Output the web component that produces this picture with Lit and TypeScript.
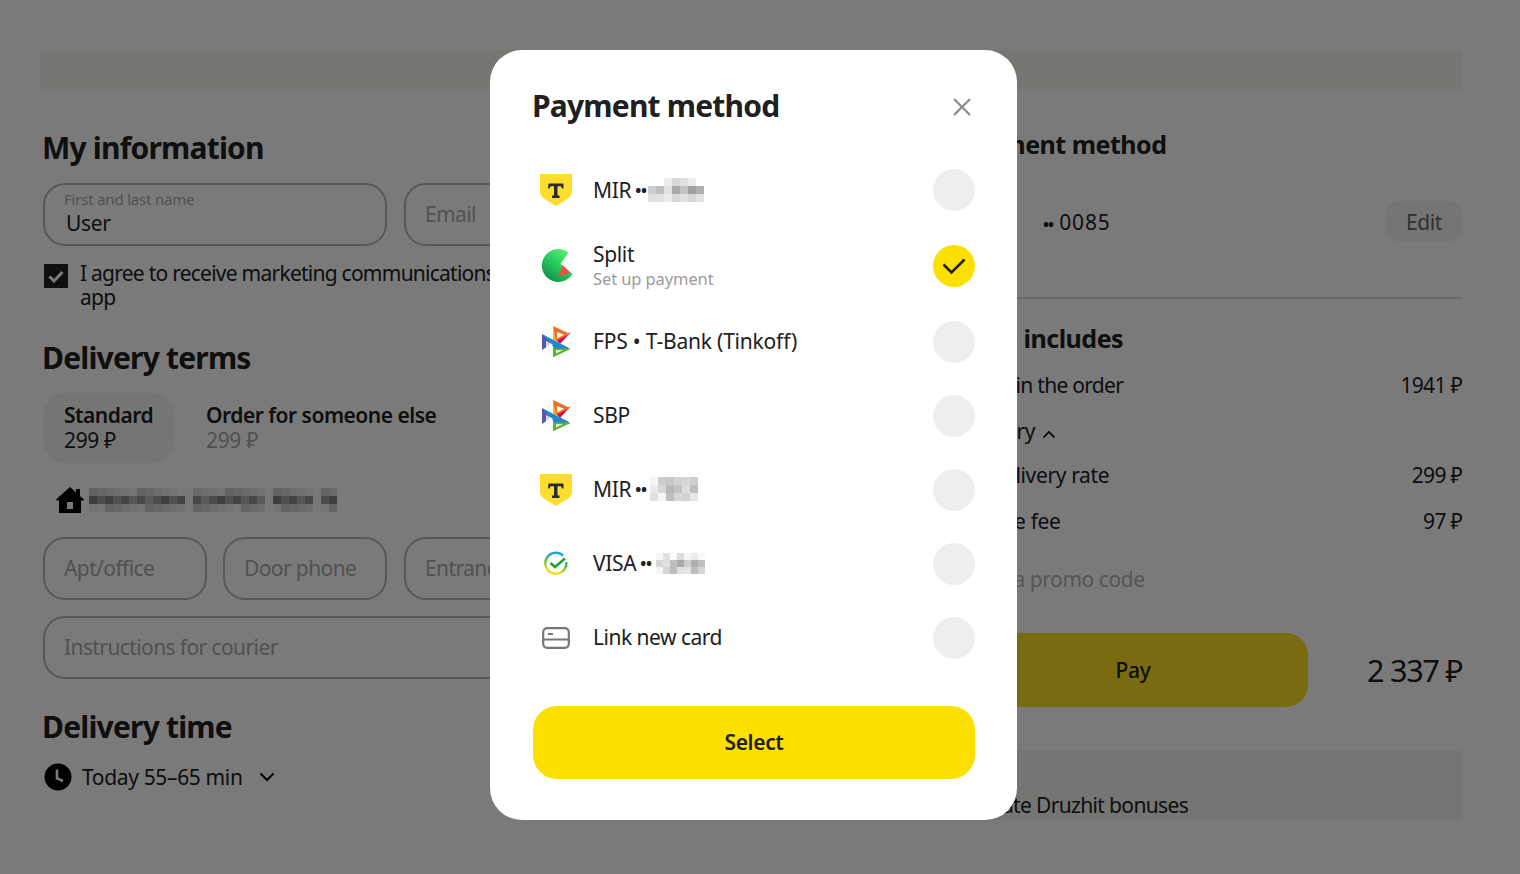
import { LitElement, html, css, svg } from "lit";
import { customElement } from "lit/decorators.js";

const shield = svg`<svg width="34" height="34" viewBox="0 0 34 34"><path fill="#ffdd2d" d="M1 1h32v17c0 5-3 7-7 9.500l-9 5.500-9-5.500C4 25 1 23 1 18z"/><path fill="#2a2a2a" d="M9.500 10.500h15v5h-1.500l-1-2.300h-3.500v9.300h2v2.500h-7.500v-2.500h2v-9.300h-3.500l-1 2.300h-1.500z"/></svg>`;
const split = svg`<svg class="sp" width="34" height="36" viewBox="0 0 34 36"><defs><linearGradient id="g" x1="0.800" y1="0.050" x2="0.200" y2="0.950"><stop offset="0" stop-color="#55f26c"/><stop offset="0.500" stop-color="#27c95c"/><stop offset="1" stop-color="#0f8f4a"/></linearGradient></defs><path fill="url(#g)" d="M19.500 16L27.500 4.500A16.500 16.500 0 1 0 31.500 26z"/><path fill="#f0513e" d="M21.500 17L29 24.500Q24 28 16.500 27.500Q21 23 21.500 17z"/></svg>`;
const sbp = svg`<svg width="30" height="34" viewBox="0 0 30 34"><path fill="#5b57a2" d="M1 9l12 8-12 8z"/><path fill="#d90751" d="M15 15l15-8-11 12z"/><path fill="#fab900" d="M12 1l3 14-3 3z"/><path fill="#ed6f26" d="M12 1l17 8-14 7z"/><path fill="#fff" d="M16 7l7 2.800-7 3.700z"/><path fill="#0f754e" d="M12 32l17-8-13-3z"/><path fill="#63b22f" d="M12 19l17 5-17 8z"/><path fill="#1e88d2" d="M1 9l28 14.500H14z"/><path fill="#fff" d="M5 16l7 3.500-7 3.500z" opacity="0.750"/><path fill="#fff" d="M15 25l7 0-7 3.500z" opacity="0.800"/></svg>`;
const sber = svg`<svg width="26" height="26" viewBox="0 0 26 26"><defs><linearGradient id="s" x1="0.350" y1="1" x2="0.650" y2="0"><stop offset="0.100" stop-color="#f2e11a"/><stop offset="0.500" stop-color="#4cc03a"/><stop offset="0.950" stop-color="#19a4e0"/></linearGradient></defs><path fill="none" stroke="url(#s)" stroke-width="2.400" d="M20 4.500A10.500 10.500 0 1 0 23.300 11"/><path fill="none" stroke="#21a038" stroke-width="2.600" d="M7.500 12l4.500 4 10-8.500"/></svg>`;
const card = svg`<svg width="28" height="22" viewBox="0 0 28 22"><rect x="1.200" y="1.200" width="25.600" height="19.600" rx="4" fill="none" stroke="#777" stroke-width="2.200"/><path d="M1.500 12.500h25" stroke="#777" stroke-width="2"/><path d="M6 7h5" stroke="#777" stroke-width="2"/></svg>`;
const close = svg`<svg class="x" width="20" height="20" viewBox="0 0 20 20"><path d="M2 2l16 16M18 2L2 18" stroke="#8f8f8f" stroke-width="2.400" fill="none"/></svg>`;
const check = svg`<svg width="26" height="20" viewBox="0 0 26 20"><path d="M2.500 8.500l8 8L23.500 3.500" stroke="#21201f" stroke-width="2.600" fill="none"/></svg>`;
const tick = svg`<svg width="16" height="13" viewBox="0 0 16 13"><path d="M1.500 6.500l4.500 4.500L14.500 2" stroke="#fff" stroke-width="3" fill="none"/></svg>`;
const home = svg`<svg width="28" height="26" viewBox="0 0 28 26"><path fill="#000" d="M14 0L0 12.500 1.500 14 3 13v13h22V13l1.500 1 1.500-1.500-4-3.600V2h-4v3.400z"/><rect x="11" y="15" width="6" height="7" fill="#fff"/></svg>`;
const clock = svg`<svg width="28" height="28" viewBox="0 0 28 28"><circle cx="14" cy="14" r="13.500" fill="#000"/><path d="M13 6.500v9l6 2.500" stroke="#fff" stroke-width="2.600" fill="none"/></svg>`;
const chev = svg`<svg width="16" height="10" viewBox="0 0 16 10"><path d="M1.500 1.500L8 8l6.500-6.500" stroke="#000" stroke-width="2" fill="none"/></svg>`;
const chevUp = svg`<svg class="cu" width="14" height="9" viewBox="0 0 14 9"><path d="M1.500 7.500L7 2l5.500 5.500" stroke="#000" stroke-width="1.700" fill="none"/></svg>`;

function mosaic(rows: number[][], cell: number, cls = "") {
  return html`<span class="mosaic ${cls}" style="grid-template-columns:repeat(${rows[0].length},${cell}px);grid-auto-rows:${cell}px">
    ${rows.flat().map((v) => html`<i style="background:rgb(${v},${v},${v})"></i>`)}
  </span>`;
}
const m1 = [[255,255,235,215,225,235,255],[205,190,225,170,195,160,175],[225,225,235,215,225,215,225]];
const m2 = [[245,205,200,210,215,205],[235,215,185,195,220,190],[225,245,190,215,210,230]];
const m3 = [[245,225,250,220,245,235,250],[215,225,190,170,205,175,190],[245,215,190,225,230,190,215]];
const gaps = new Set([12, 22, 28]);
const addr = [0, 1, 2].map((r) =>
  Array.from({ length: 31 }, (_, c) => {
    if (gaps.has(c)) return 250;
    if (r === 1) return 125 + ((c * 37) % 65);
    return 205 + ((c * 53 + r * 17) % 45);
  })
);

@customElement("app-root")
export class AppRoot extends LitElement {
  static styles = css`
    :host { display: block; width: 1520px; height: 874px; position: relative; overflow: hidden; background: #fff;
      font-family: "Noto Sans", "Liberation Sans", sans-serif; color: #21201f; font-size: 21px; line-height: 24px; letter-spacing: -0.35px; }
    .page { padding: 50px 58px 0 40px; display: flex; flex-direction: column; }
    .band { height: 40px; background: #faf7f0; }
    .cols { display: flex; justify-content: space-between; }
    .left { width: 708px; padding: 40px 0 0 3px; }
    .right { width: 504px; padding-top: 39px; white-space: nowrap; }
    h2 { margin: 0 0 0 -1px; font-size: 30px; line-height: 36px; font-weight: 700; letter-spacing: -0.8px; }
    .right h2 { margin-left: 0; font-size: 25px; line-height: 30px; letter-spacing: -0.5px; }
    .fields { display: grid; grid-template-columns: 344px 344px; gap: 17px; margin-top: 17px; }
    .fields3 { display: grid; grid-template-columns: 164px 164px 344px; gap: 16px; margin-top: 24px; }
    .fields3 .field:last-child { margin-left: 1px; }
    .field { box-sizing: border-box; height: 63px; border: 2px solid #b8b8b8; border-radius: 22px; padding: 0 19px 2px; display: flex; flex-direction: column; justify-content: center; color: #aaa; font-size: 21px; letter-spacing: -0.6px; }
    .wide { margin-top: 16px; }
    .tiny { font-size: 15px; line-height: 17px; letter-spacing: -0.2px; margin-top: -1px; }
    .val { color: #21201f; line-height: 26px; margin: 2px 0 0 2px; letter-spacing: -0.35px; }
    .agree { display: flex; gap: 12px; margin-top: 15px; height: 51px; letter-spacing: -0.75px; white-space: nowrap; }
    .box { width: 24px; height: 24px; background: #21201f; margin: 3px 0 0 1px; display: flex; align-items: center; justify-content: center; flex: none; }
    .dt { margin-top: 28px; }
    .terms { display: flex; gap: 32px; margin-top: 17px; }
    .term { padding: 10px 21px 0; height: 70px; box-sizing: border-box; border-radius: 22px; font-weight: 600; letter-spacing: -0.5px; white-space: nowrap; }
    .term.on { background: #f5f4f2; }
    .term.off { padding-left: 0; }
    .term small { display: block; font-size: 21px; font-weight: 400; line-height: 25px; letter-spacing: -0.35px; margin-top: 1px; }
    .term.off small { color: #aaa; }
    .addr { display: flex; align-items: center; gap: 5px; margin: 24px 0 0 13px; height: 26px; }
    .time { margin-top: 30px; }
    .when { display: flex; align-items: center; margin: 18px 0 0 1px; }
    .when span { margin: 0 16px 0 10px; }
    .row { display: flex; justify-content: space-between; }
    .pm { padding-left: 85px; margin-top: 42px; height: 72px; display: flex; justify-content: space-between; align-items: flex-start; }
    .pm > span { margin-top: 9px; letter-spacing: 0.8px; }
    .pm > span b { font-weight: 700; font-size: 16px; letter-spacing: -1px; }
    .edit { width: 76px; height: 41px; box-sizing: border-box; background: #f5f4f2; border-radius: 14px; display: flex; align-items: center; justify-content: center; color: #666; }
    hr { margin: 24px 0 0 -15px; border: 0; height: 2px; background: #ddd; }
    .inc { margin-top: 24px; }
    .list { margin-top: 20px; display: flex; flex-direction: column; }
    .list .row { height: 46px; }
    .list .row.d { height: 44px; }
    .items { letter-spacing: -0.7px; }
    .amt { letter-spacing: -0.7px; }
    .indent { margin-left: 31px; }
    .cu { margin-left: 2px; }
    .promo { color: #b4b4b4; margin-top: 12px; letter-spacing: -0.45px; }
    .paybar { display: flex; align-items: center; justify-content: space-between; margin-top: 42px; }
    .pay { width: 350px; height: 74px; border-radius: 22px; background: #fce020; display: flex; align-items: center; justify-content: center; font-weight: 500; }
    .total { font-size: 30.500px; letter-spacing: -1.200px; line-height: 40px; }
    .bonus { height: 70px; margin-top: 43px; background: #f5f4f0; display: flex; align-items: flex-end; box-sizing: border-box; padding: 0 0 3px 15px; margin-left: -15px; letter-spacing: -0.65px; }
    .dim { position: absolute; inset: 0; background: rgba(0,0,0,0.52); }
    .modal { position: absolute; left: 490px; top: 50px; width: 527px; height: 770px; box-sizing: border-box; background: #fff; border-radius: 32px; padding: 0 42px 0 43px; display: flex; flex-direction: column; }
    .head { box-sizing: border-box; display: flex; justify-content: space-between; align-items: center; height: 103px; padding: 8px 2px 0 0; }
    .head h1 { margin: 0 0 0 -1px; font-size: 30px; line-height: 36px; font-weight: 700; letter-spacing: -0.8px; }
    .x { margin: 2px 1px 0 0; }
    .opt { display: flex; align-items: center; height: 74px; }
    .opt.tall { height: 78px; }
    .ic { width: 46px; flex: none; display: flex; justify-content: center; margin-right: 14px; }
    .sp { margin-left: 3px; }
    .lbl { flex: 1; display: flex; align-items: center; gap: 4px; white-space: nowrap; }
    .lbl.up { margin-top: -2px; }
    .lbl.loose { letter-spacing: -0.2px; }
    .lbl.tight { letter-spacing: -0.5px; }
    .lbl .dots { font-weight: 700; font-size: 16px; letter-spacing: -0.3px; }
    .stack { display: block; margin-top: -1px; }
    .stack small { display: block; font-size: 16.500px; line-height: 20px; letter-spacing: -0.1px; color: #9b9b9b; margin-top: 3px; }
    .radio { width: 42px; height: 42px; border-radius: 50%; background: #eee; flex: none; display: flex; align-items: center; justify-content: center; }
    .radio.on { background: #fce000; }
    .select { box-sizing: border-box; height: 73px; padding-bottom: 2px; border-radius: 24px; background: #fce000; display: flex; align-items: center; justify-content: center; font-weight: 600; margin-top: 31px; }
    .mosaic { display: inline-grid; }
    .mosaic i { display: block; }
    .mosaic.m1 { margin-left: -3px; }
    .mosaic.m2 { margin-left: -1px; }
  `;

  render() {
    return html`
      <div class="page">
        <div class="band"></div>
        <div class="cols">
          <section class="left">
            <h2>My information</h2>
            <div class="fields">
              <div class="field"><div class="tiny">First and last name</div><div class="val">User</div></div>
              <div class="field">Email</div>
            </div>
            <div class="agree"><div class="box">${tick}</div><div>I agree to receive marketing communications from the<br />app</div></div>
            <h2 class="dt">Delivery terms</h2>
            <div class="terms">
              <div class="term on">Standard<small>299 ₽</small></div>
              <div class="term off">Order for someone else<small>299 ₽</small></div>
            </div>
            <div class="addr">${home}${mosaic(addr, 8)}</div>
            <div class="fields3">
              <div class="field">Apt/office</div><div class="field">Door phone</div><div class="field">Entrance</div>
            </div>
            <div class="field wide">Instructions for courier</div>
            <h2 class="time">Delivery time</h2>
            <div class="when">${clock}<span>Today 55–65 min</span>${chev}</div>
          </section>
          <section class="right">
            <h2>Payment method</h2>
            <div class="pm"><span><b>••</b> 0085</span><div class="edit">Edit</div></div>
            <hr />
            <h2 class="inc">Price includes</h2>
            <div class="list">
              <div class="row"><span class="items">Items in the order</span><span class="amt">1941 ₽</span></div>
              <div class="row d"><span>Delivery ${chevUp}</span></div>
              <div class="row"><span class="indent">Delivery rate</span><span class="amt">299 ₽</span></div>
              <div class="row"><span>Service fee</span><span class="amt">97 ₽</span></div>
            </div>
            <div class="promo">Enter a promo code</div>
            <div class="paybar"><div class="pay">Pay</div><div class="total">2 337 ₽</div></div>
            <div class="bonus">Activate Druzhit bonuses</div>
          </section>
        </div>
      </div>
      <div class="dim"></div>
      <div class="modal">
        <div class="head"><h1>Payment method</h1>${close}</div>
        <div class="opt"><div class="ic">${shield}</div><div class="lbl">MIR <span class="dots">••</span>${mosaic(m1, 8, "m1")}</div><div class="radio"></div></div>
        <div class="opt tall"><div class="ic">${split}</div><div class="lbl"><span class="stack">Split<small>Set up payment</small></span></div><div class="radio on">${check}</div></div>
        <div class="opt"><div class="ic">${sbp}</div><div class="lbl up loose">FPS • T-Bank (Tinkoff)</div><div class="radio"></div></div>
        <div class="opt"><div class="ic">${sbp}</div><div class="lbl up">SBP</div><div class="radio"></div></div>
        <div class="opt"><div class="ic">${shield}</div><div class="lbl up">MIR <span class="dots">••</span>${mosaic(m2, 8, "m2")}</div><div class="radio"></div></div>
        <div class="opt"><div class="ic">${sber}</div><div class="lbl up">VISA <span class="dots">••</span>${mosaic(m3, 7)}</div><div class="radio"></div></div>
        <div class="opt"><div class="ic">${card}</div><div class="lbl up tight">Link new card</div><div class="radio"></div></div>
        <div class="select">Select</div>
      </div>
    `;
  }
}
